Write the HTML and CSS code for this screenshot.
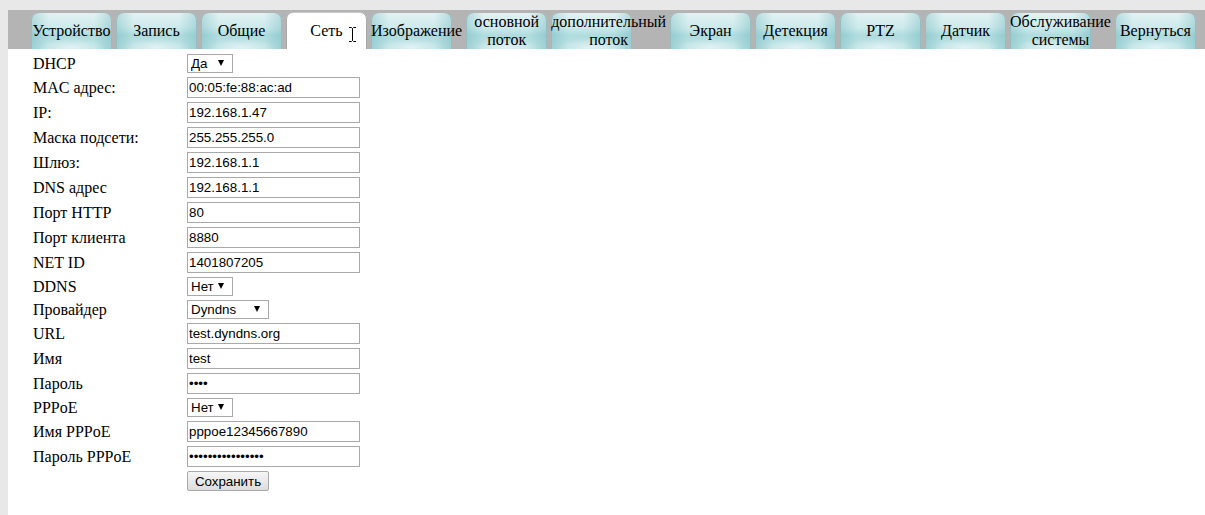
FILE: index.html
```html
<!DOCTYPE html>
<html lang="ru">
  <head>
    <meta charset="UTF-8" />
    <title>Сеть</title>
    <link rel="stylesheet" href="styles.css">
  </head>
  <body>
    <div class="page">
      <ul class="tabs">
        <li class="tab"><span>Устройство</span></li>
        <li class="tab"><span>Запись</span></li>
        <li class="tab"><span>Общие</span></li>
        <li class="tab active">
          <span>Сеть</span>
          <svg class="ibeam" width="9" height="17" viewBox="0 0 9 17">
            <path d="M1 1.5h2.5l1 1 1-1H8M4.5 2.5v12M1 15.5h2.5l1-1 1 1H8" fill="none" stroke="#fff" stroke-width="2.4"/>
            <path d="M1 1.5h2.5l1 1 1-1H8M4.5 2.5v12M1 15.5h2.5l1-1 1 1H8" fill="none" stroke="#000" stroke-width="1"/>
          </svg>
        </li>
        <li class="tab"><span>Изображение</span></li>
        <li class="tab"><span>основной поток</span></li>
        <li class="tab"><span>дополнительный поток</span></li>
        <li class="tab"><span>Экран</span></li>
        <li class="tab"><span>Детекция</span></li>
        <li class="tab"><span>PTZ</span></li>
        <li class="tab"><span>Датчик</span></li>
        <li class="tab"><span>Обслуживание системы</span></li>
        <li class="tab"><span>Вернуться</span></li>
      </ul>

      <form class="net-form">
        <table>
          <tr>
            <td class="label">DHCP</td>
            <td><div class="select"><select class="w-short"><option>Да</option><option>Нет</option></select></div></td>
          </tr>
          <tr>
            <td class="label">MAC адрес:</td>
            <td><input class="field" type="text" value="00:05:fe:88:ac:ad"></td>
          </tr>
          <tr>
            <td class="label">IP:</td>
            <td><input class="field" type="text" value="192.168.1.47"></td>
          </tr>
          <tr>
            <td class="label">Маска подсети:</td>
            <td><input class="field" type="text" value="255.255.255.0"></td>
          </tr>
          <tr>
            <td class="label">Шлюз:</td>
            <td><input class="field" type="text" value="192.168.1.1"></td>
          </tr>
          <tr>
            <td class="label">DNS адрес</td>
            <td><input class="field" type="text" value="192.168.1.1"></td>
          </tr>
          <tr>
            <td class="label">Порт HTTP</td>
            <td><input class="field" type="text" value="80"></td>
          </tr>
          <tr>
            <td class="label">Порт клиента</td>
            <td><input class="field" type="text" value="8880"></td>
          </tr>
          <tr>
            <td class="label">NET ID</td>
            <td><input class="field" type="text" value="1401807205"></td>
          </tr>
          <tr>
            <td class="label">DDNS</td>
            <td><div class="select"><select class="w-short"><option>Нет</option><option>Да</option></select></div></td>
          </tr>
          <tr>
            <td class="label">Провайдер</td>
            <td><div class="select"><select class="w-long"><option>Dyndns</option><option>3322</option></select></div></td>
          </tr>
          <tr>
            <td class="label">URL</td>
            <td><input class="field" type="text" value="test.dyndns.org"></td>
          </tr>
          <tr>
            <td class="label">Имя</td>
            <td><input class="field" type="text" value="test"></td>
          </tr>
          <tr>
            <td class="label">Пароль</td>
            <td><input class="field" type="password" value="test"></td>
          </tr>
          <tr>
            <td class="label">PPPoE</td>
            <td><div class="select"><select class="w-short"><option>Нет</option><option>Да</option></select></div></td>
          </tr>
          <tr>
            <td class="label">Имя PPPoE</td>
            <td><input class="field" type="text" value="pppoe12345667890"></td>
          </tr>
          <tr>
            <td class="label">Пароль PPPoE</td>
            <td><input class="field" type="password" value="pppoe12345667890"></td>
          </tr>
          <tr>
            <td class="label"></td>
            <td><button class="save" type="button">Сохранить</button></td>
          </tr>
        </table>
      </form>
    </div>
  </body>
</html>
```

FILE: styles.css
```css
html,
body {
  height: 100%;
}

body {
  margin: 0;
  padding: 10px 0 0 8px;
  box-sizing: border-box;
  background: #e8e8e8;
  font-family: "Liberation Serif", "Times New Roman", serif;
  font-size: 16px;
  color: #000;
}

.page {
  background: #ffffff;
  min-height: 100%;
}

/* Top menu */
.tabs {
  display: flex;
  align-items: flex-end;
  gap: 4px;
  margin: 0;
  padding: 0 0 0 23px;
  height: 39px;
  list-style: none;
  background: #b4b4b4;
}

.tab {
  position: relative;
  display: flex;
  align-items: center;
  justify-content: center;
  flex: 0 0 auto;
  width: min-content;
  min-width: 81px;
  height: 36px;
  line-height: 18px;
  text-align: center;
  cursor: pointer;
}

.tab::before {
  content: "";
  position: absolute;
  left: 0;
  top: 0;
  width: 81px;
  height: 100%;
  border-radius: 7px 7px 0 0;
  background:
    radial-gradient(ellipse 34px 9px at 50% 95%, rgba(255, 255, 255, 0.55), rgba(255, 255, 255, 0)),
    linear-gradient(to right, rgba(80, 165, 172, 0.3), rgba(80, 165, 172, 0) 22%, rgba(80, 165, 172, 0) 78%, rgba(80, 165, 172, 0.3)),
    linear-gradient(to bottom, #e2f2f3 0%, #cdeaec 40%, #b0dcdf 62%, #bfe3e5 100%);
  box-shadow: inset 1px 0 0 #98bcbf, inset -1px 0 0 #98bcbf;
}

.tab span {
  position: relative;
}

.tab.active::before {
  top: -1px;
  height: calc(100% + 1px);
  background: #ffffff;
  box-shadow: inset 1px 0 0 #a8a8a8, inset -1px 0 0 #a8a8a8, inset 0 1px 0 #c8c8c8;
}

.ibeam {
  position: absolute;
  left: 62px;
  top: 13px;
}

/* Network settings table */
.net-form table {
  margin: 2px 0 0 22px;
  border-spacing: 2px;
}

.net-form td {
  padding: 1px;
  vertical-align: middle;
}

.net-form td.label {
  width: 150px;
  white-space: nowrap;
}

.field {
  display: block;
  box-sizing: border-box;
  width: 173px;
  height: 21px;
  margin: 0;
  padding: 0 1px;
  border: 1px solid #a9a9a9;
  font-family: "Liberation Sans", Arial, sans-serif;
  font-size: 13.333px;
  color: #000;
  background: #fff;
}

.select {
  position: relative;
  width: max-content;
}

.select select {
  display: block;
  box-sizing: border-box;
  height: 19px;
  margin: 0;
  padding: 0 0 0 3px;
  border: 1px solid #a9a9a9;
  border-radius: 0;
  background: #fff;
  font-family: "Liberation Sans", Arial, sans-serif;
  font-size: 13.333px;
  color: #000;
  appearance: none;
  -webkit-appearance: none;
}

.select::after {
  content: "";
  position: absolute;
  top: 6px;
  right: 9px;
  border-left: 3px solid transparent;
  border-right: 3px solid transparent;
  border-top: 6px solid #000;
  pointer-events: none;
}

.w-short {
  width: 46px;
}

.w-long {
  width: 82px;
}

.save {
  display: block;
  box-sizing: border-box;
  width: 82px;
  height: 20px;
  margin: 0;
  padding: 0;
  border: 1px solid #a9a9a9;
  border-radius: 2px;
  background: linear-gradient(to bottom, #f6f6f6, #dddddd);
  font-family: "Liberation Sans", Arial, sans-serif;
  font-size: 13.333px;
  color: #000;
}
```
